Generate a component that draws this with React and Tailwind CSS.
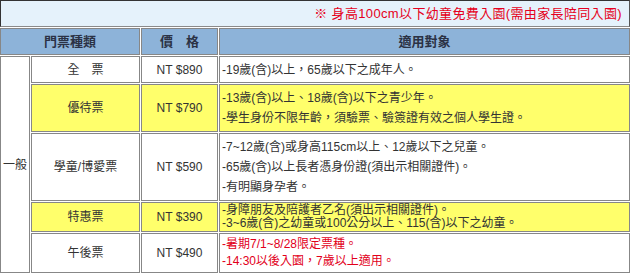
import React from "react";

const font = { fontFamily: '"Liberation Sans", "Noto Sans CJK TC", sans-serif' };

function Cell({ className = "", children }) {
  return (
    <div className={"border border-[#878787] flex items-center " + className}>
      {children}
    </div>
  );
}

export default function App() {
  return (
    <div className="w-[630px] h-[273px] bg-white" style={font}>
      <div className="grid grid-cols-[30px_109px_77px_411px] grid-rows-[27px_27px_27px_48px_68px_30px_40px] gap-px bg-white text-[12px] text-[#333]">
        <div className="col-span-4 border-t border-l border-r border-t-[#333] border-l-[#333] border-r-[#555] border-b border-b-[#8a8a8a] bg-[#e5f2fb] flex items-center justify-end pr-[7px]">
          <span className="text-[13px] tracking-[0.35px] text-[#e60020]">※ 身高100cm以下幼童免費入園(需由家長陪同入園)</span>
        </div>

        <Cell className="col-span-2 justify-center bg-[#8db3d9] font-bold text-[13px] text-[#2b3245]">門票種類</Cell>
        <Cell className="justify-center bg-[#8db3d9] font-bold text-[13px] text-[#2b3245]">價　格</Cell>
        <Cell className="justify-center bg-[#8db3d9] font-bold text-[13px] text-[#2b3245]">適用對象</Cell>

        <Cell className="row-span-5 justify-center bg-white">一般</Cell>

        <Cell className="justify-center bg-white">全　票</Cell>
        <Cell className="justify-center bg-white">NT $890</Cell>
        <Cell className="bg-white pl-[2px]">-19歲(含)以上，65歲以下之成年人。</Cell>

        <Cell className="justify-center bg-[#ffff6b]">優待票</Cell>
        <Cell className="justify-center bg-[#ffff6b]">NT $790</Cell>
        <Cell className="bg-[#ffff6b] pl-[2px]">
          <div className="leading-[20px]">
            <div>-13歲(含)以上、18歲(含)以下之青少年。</div>
            <div>-學生身份不限年齡，須驗票、驗簽證有效之個人學生證。</div>
          </div>
        </Cell>

        <Cell className="justify-center bg-white">學童/博愛票</Cell>
        <Cell className="justify-center bg-white">NT $590</Cell>
        <Cell className="bg-white pl-[2px]">
          <div className="leading-[20px]">
            <div>-7~12歲(含)或身高115cm以上、12歲以下之兒童。</div>
            <div>-65歲(含)以上長者憑身份證(須出示相關證件)。</div>
            <div>-有明顯身孕者。</div>
          </div>
        </Cell>

        <Cell className="justify-center bg-[#ffff6b]">特惠票</Cell>
        <Cell className="justify-center bg-[#ffff6b]">NT $390</Cell>
        <Cell className="bg-[#ffff6b] pl-[2px]">
          <div className="leading-[13px]">
            <div>-身障朋友及陪護者乙名(須出示相關證件)。</div>
            <div>-3~6歲(含)之幼童或100公分以上、115(含)以下之幼童。</div>
          </div>
        </Cell>

        <Cell className="justify-center bg-white">午後票</Cell>
        <Cell className="justify-center bg-white">NT $490</Cell>
        <Cell className="bg-white pl-[2px] text-[#e2001a]">
          <div className="leading-[17px]">
            <div>-暑期7/1~8/28限定票種。</div>
            <div>-14:30以後入園，7歲以上適用。</div>
          </div>
        </Cell>
      </div>
    </div>
  );
}
